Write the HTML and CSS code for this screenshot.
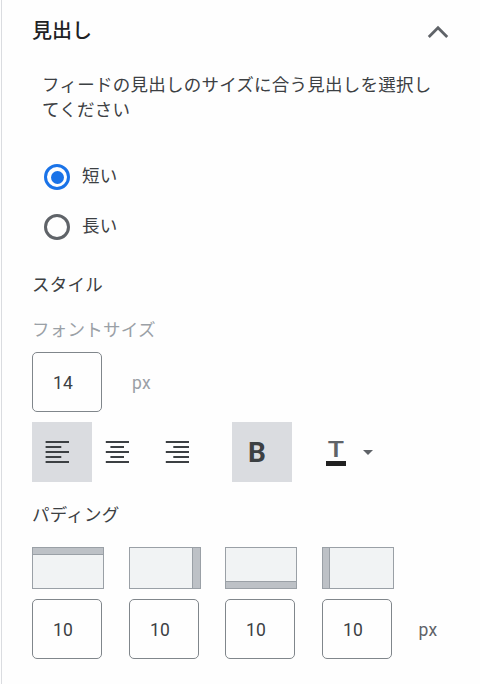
FILE: index.html
```html
<!DOCTYPE html>
<html lang="ja">
<head>
<meta charset="utf-8">
<title>見出し</title>
<link rel="stylesheet" href="styles.css">
</head>
<body>
<main class="panel">
  <header class="header">
    <h2 class="title">見出し</h2>
    <svg class="chevron" width="22" height="14" viewBox="0 0 22 14"><path d="M1.8 12 11 2.8 20.2 12"/></svg>
  </header>
  <p class="hint">フィードの見出しのサイズに合う見出しを選択してください</p>
  <div class="radios">
    <label class="option"><span class="radio checked"></span><span class="option-text">短い</span></label>
    <label class="option"><span class="radio"></span><span class="option-text">長い</span></label>
  </div>
  <h3 class="section">スタイル</h3>
  <div class="field-label">フォントサイズ</div>
  <div class="size-row"><div class="box">14</div><span class="unit muted">px</span></div>
  <div class="toolbar">
    <div class="tool active"><svg width="60" height="60" viewBox="0 0 60 60"><path d="M13.6 20H37M13.6 25H29.3M13.6 30H37M13.6 35H29.3M13.6 40H37"/></svg></div>
    <div class="tool"><svg width="60" height="60" viewBox="0 0 60 60"><path d="M13.8 20H37M18.4 25H32M13.8 30H37M18.4 35H32M13.8 40H37"/></svg></div>
    <div class="tool"><svg width="60" height="60" viewBox="0 0 60 60"><path d="M13.8 20H37M21.3 25H37M13.8 30H37M21.3 35H37M13.8 40H37"/></svg></div>
    <div class="tool active bold"><span class="bold-letter">B</span></div>
    <div class="color-tool">
      <div class="color-icon"><span class="color-letter">T</span><span class="swatch"></span></div>
      <span class="caret"></span>
    </div>
  </div>
  <h3 class="section padding-title">パディング</h3>
  <div class="paddings">
    <div class="side"><div class="preview top"></div><div class="box">10</div></div>
    <div class="side"><div class="preview right"></div><div class="box">10</div></div>
    <div class="side"><div class="preview bottom"></div><div class="box">10</div></div>
    <div class="side"><div class="preview left"></div><div class="box">10</div></div>
    <span class="unit">px</span>
  </div>
</main>
</body>
</html>
```
FILE: styles.css
```css
*, *::before { box-sizing: border-box; }
body {
  margin: 0;
  background: #fefefe;
  color: #3c4043;
  font: 17.5px/25px Roboto, "Noto Sans CJK JP", sans-serif;
  letter-spacing: 0.25px;
}
.panel {
  height: 684px;
  margin-left: 1px;
  padding: 16px 30px 0;
  border-left: 1px solid #dadce0;
  overflow: hidden;
}
.header { display: flex; justify-content: space-between; height: 30px; }
.title { margin: 0; font-size: 20px; line-height: 30px; font-weight: 500; letter-spacing: 0; color: #202124; }
.chevron { margin: 9px 1px 0 0; }
.chevron path { fill: none; stroke: #5f6368; stroke-width: 2.8; }
.hint { width: 400px; height: 50px; margin: 27px 0 0 10px; }
.radios { margin: 29px 0 0 12px; }
.option { display: flex; align-items: center; height: 50px; }
.radio {
  display: flex;
  align-items: center;
  justify-content: center;
  width: 26px;
  height: 26px;
  border: 3px solid #5f6368;
  border-radius: 50%;
}
.radio.checked { border-color: #1a73e8; }
.radio.checked::before { content: ""; width: 13px; height: 13px; border-radius: 50%; background: #1a73e8; }
.option-text { margin: -2px 0 0 12px; }
.section { margin: 21px 0 0; font-size: 17.5px; line-height: 25px; font-weight: 400; }
.field-label { margin-top: 20px; color: #9aa0a6; }
.size-row { display: flex; align-items: center; margin-top: 9px; }
.box {
  width: 70px;
  height: 60px;
  padding-left: 20px;
  border: 1px solid #80868b;
  border-radius: 5px;
  line-height: 60px;
}
.unit { color: #5f6368; }
.size-row .unit { margin: 2px 0 0 30px; }
.unit.muted { color: #9aa0a6; }
.toolbar { display: flex; height: 60px; margin-top: 10px; }
.tool { width: 60px; height: 60px; }
.tool.active { background: #dadce0; }
.tool svg { display: block; }
.tool path { fill: none; stroke: #3c4043; stroke-width: 2; }
.bold { margin-left: 20px; padding-left: 16px; }
.bold-letter { font: 700 28px/62px Roboto, sans-serif; letter-spacing: 0; }
.color-tool { display: flex; margin-left: 34px; }
.color-icon { width: 20px; height: 44px; padding-top: 17px; }
.color-letter {
  display: block;
  height: 22px;
  color: #5f6368;
  font: 600 21px/22px Inter, sans-serif;
  letter-spacing: 0;
  text-align: center;
  transform: scaleX(1.25);
}
.swatch { display: block; height: 5px; background: #212121; }
.caret {
  height: 0;
  margin: 28px 0 0 17px;
  border: 5px solid transparent;
  border-top-color: #5f6368;
  border-bottom: 0;
}
.padding-title { margin-top: 21px; }
.paddings { display: grid; grid-template-columns: 97px 96px 97px 96.5px auto; margin-top: 19px; }
.preview { width: 72px; height: 42px; margin-bottom: 10px; border: 1px solid #9aa0a6; background: #f1f3f4; }
.preview::before { content: ""; display: block; background: #bdc1c6; }
.top::before { height: 7px; border-bottom: 1px solid #9aa0a6; }
.bottom { display: flex; align-items: flex-end; }
.bottom::before { width: 100%; height: 7px; border-top: 1px solid #9aa0a6; }
.left::before { width: 7px; height: 100%; border-right: 1px solid #9aa0a6; }
.right { display: flex; justify-content: flex-end; }
.right::before { width: 8px; height: 100%; border-left: 1px solid #9aa0a6; }
.paddings .unit { margin-top: 71px; }
```
